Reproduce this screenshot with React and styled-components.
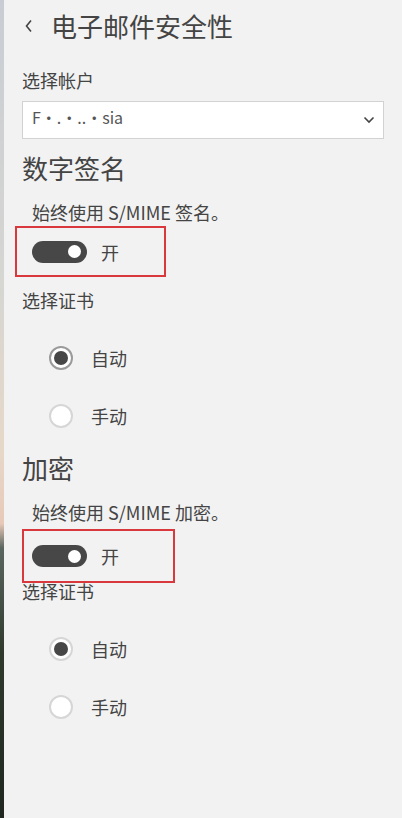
import React from "react";
import styled, { createGlobalStyle } from "styled-components";

const GlobalStyle = createGlobalStyle`
  html, body {
    margin: 0;
    padding: 0;
    background: #f2f2f2;
  }
  body {
    font-family: "Noto Sans CJK SC", "Noto Sans", sans-serif;
    color: #444;
  }
`;

const Page = styled.div`
  display: flex;
  width: 402px;
  height: 818px;
  overflow: hidden;
`;

const Wallpaper = styled.div`
  flex: 0 0 4px;
  background: linear-gradient(
    180deg,
    #c9cdd3 0%,
    #d6d6d2 35%,
    #e6d8c8 55%,
    #e8c9b8 64%,
    #5a6660 67%,
    #2f3a2c 80%,
    #1f2720 100%
  );
`;

const Panel = styled.div`
  flex: 1;
  display: flex;
  flex-direction: column;
  padding-left: 18px;
  background: #f2f2f2;
`;

const Header = styled.div`
  display: flex;
  align-items: center;
  height: 52px;
  gap: 17px;
`;

const BackButton = styled.div`
  display: flex;
  align-items: center;
  padding-left: 2px;
  color: #444;
`;

const Title = styled.h1`
  margin: 0;
  font-size: 26px;
  font-weight: 400;
  line-height: 36px;
  color: #444;
`;

const Label = styled.div`
  font-size: 18px;
  line-height: 24px;
  color: #444;
  margin-top: ${(p) => p.$top}px;
  padding-left: ${(p) => p.$indent || 0}px;
`;

const Select = styled.div`
  display: flex;
  align-items: center;
  justify-content: space-between;
  box-sizing: border-box;
  width: 362px;
  height: 38px;
  margin-top: 9px;
  padding: 0 8px 0 9px;
  background: #fff;
  border: 1px solid #d2d2d2;
  font-size: 16px;
  color: #333;
`;

const Blurred = styled.span`
  color: #555;
  transform: translateY(-3px);
`;

const SectionTitle = styled.h2`
  margin: ${(p) => p.$top}px 0 0;
  font-size: 26px;
  font-weight: 400;
  line-height: 34px;
  color: #444;
`;

const Highlight = styled.div`
  display: flex;
  align-items: center;
  gap: 14px;
  box-sizing: border-box;
  width: ${(p) => p.$width}px;
  height: ${(p) => p.$height}px;
  margin-top: ${(p) => p.$top}px;
  margin-left: ${(p) => p.$left}px;
  padding-left: ${(p) => p.$pad}px;
  border: 2px solid #d9383c;
`;

const Track = styled.div`
  display: flex;
  align-items: center;
  justify-content: flex-end;
  box-sizing: border-box;
  width: 55px;
  height: 22px;
  padding-right: 6px;
  border-radius: 11px;
  background: #474747;
`;

const Knob = styled.div`
  width: 13px;
  height: 13px;
  border-radius: 50%;
  background: #fff;
`;

const ToggleText = styled.span`
  font-size: 18px;
  line-height: 24px;
  color: #444;
`;

const RadioGroup = styled.div`
  display: flex;
  flex-direction: column;
  margin-top: 17px;
  padding-left: 27px;
`;

const RadioRow = styled.div`
  display: flex;
  align-items: center;
  gap: 18px;
  height: 58px;
`;

const RadioCircle = styled.div`
  display: flex;
  align-items: center;
  justify-content: center;
  box-sizing: border-box;
  width: 24px;
  height: 24px;
  border-radius: 50%;
  background: #fff;
  border: 2px solid ${(p) => (p.$ring ? "#9a9a9a" : "#d6d6d6")};
`;

const RadioDot = styled.div`
  width: 14px;
  height: 14px;
  border-radius: 50%;
  background: #474747;
`;

const RadioText = styled.span`
  font-size: 18px;
  line-height: 24px;
  color: #444;
`;

const Chevron = ({ dir }) =>
  dir === "left" ? (
    <svg width="10" height="14" viewBox="0 0 10 14">
      <path d="M7 1.5 L2.5 7 L7 12.5" fill="none" stroke="#444" strokeWidth="1.6" />
    </svg>
  ) : (
    <svg width="12" height="8" viewBox="0 0 12 8">
      <path d="M1.5 1.5 L6 6 L10.5 1.5" fill="none" stroke="#444" strokeWidth="1.6" />
    </svg>
  );

const Toggle = ({ box }) => (
  <Highlight {...box}>
    <Track>
      <Knob />
    </Track>
    <ToggleText>开</ToggleText>
  </Highlight>
);

const Radios = ({ ring }) => (
  <RadioGroup>
    <RadioRow>
      <RadioCircle $ring={ring}>
        <RadioDot />
      </RadioCircle>
      <RadioText>自动</RadioText>
    </RadioRow>
    <RadioRow>
      <RadioCircle />
      <RadioText>手动</RadioText>
    </RadioRow>
  </RadioGroup>
);

const App = () => (
  <>
    <GlobalStyle />
    <Page>
      <Wallpaper />
      <Panel>
        <Header>
          <BackButton>
            <Chevron dir="left" />
          </BackButton>
          <Title>电子邮件安全性</Title>
        </Header>

        <Label $top={16}>选择帐户</Label>
        <Select>
          <Blurred>F·.·..·sia</Blurred>
          <Chevron dir="down" />
        </Select>

        <SectionTitle $top={12}>数字签名</SectionTitle>
        <Label $top={15} $indent={10}>
          始终使用 S/MIME 签名。
        </Label>
        <Toggle box={{ $width: 151, $height: 51, $top: 2, $left: -7, $pad: 15 }} />
        <Label $top={11}>选择证书</Label>
        <Radios ring />

        <SectionTitle $top={6}>加密</SectionTitle>
        <Label $top={15} $indent={10}>
          始终使用 S/MIME 加密。
        </Label>
        <Toggle box={{ $width: 153, $height: 54, $top: 5, $left: 0, $pad: 8 }} />
        <Label $top={-4}>选择证书</Label>
        <Radios />
      </Panel>
    </Page>
  </>
);

export default App;
